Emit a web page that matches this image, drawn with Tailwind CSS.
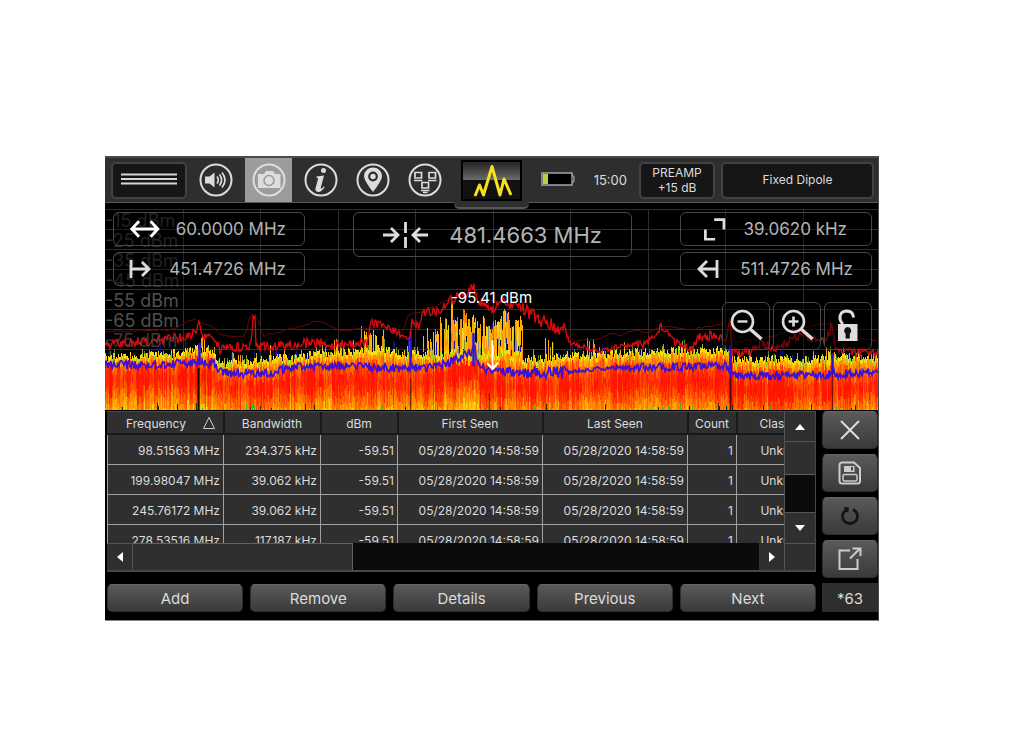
<!DOCTYPE html>
<html lang="en">
<head>
    <meta charset="UTF-8" />
    <meta name="viewport" content="width=device-width, initial-scale=1.0" />
    <title>Spectrum Analyzer</title>
    <script src="https://cdn.jsdelivr.net/npm/@tailwindcss/browser@4"></script>
</head>
<body class="bg-white pt-[156px] pl-[105px] pr-[145px] font-['Inter','Liberation_Sans',sans-serif] text-[#dcdcdc]">

<main class="bg-black border-t-2 border-r border-b border-[#4a4a4a] border-b-[#8a8a8a]">

    <!-- Toolbar -->
    <header class="relative z-10 flex items-center gap-1.5 h-[45px] pl-1.5 pr-1 bg-[#2e2e2e] border-b border-[#585858]">
        <button aria-label="Menu" class="w-[76px] h-[37px] rounded-[5px] border-2 border-[#424242] bg-[#161616] flex items-center justify-center">
            <svg class="w-14 h-4" viewBox="0 0 56 16" stroke="#d6d6d6" stroke-width="1.8"><path d="M0 2.500h56M0 7h56M0 11.500h56"/></svg>
        </button>
        <button aria-label="Sound" class="w-[46px] h-11 flex items-center justify-center">
            <svg class="w-[34px] h-[34px]" viewBox="0 0 34 34" fill="none" stroke="#dcdcdc">
                <circle cx="17" cy="17" r="15.5" stroke-width="2"/>
                <path d="M6 13.5h4.500l5-4v15l-5-4H6z" fill="#dcdcdc" stroke="none"/>
                <path d="M18 13.500q2.500 3.500 0 7M20.500 11.500q4.200 5.500 0 11M23 9.500q6 7.500 0 15" stroke-width="1.7"/>
            </svg>
        </button>
        <button aria-label="Screenshot" class="w-[47px] h-11 flex items-center justify-center bg-[#9c9c9a]">
            <svg class="w-[34px] h-[34px]" viewBox="0 0 34 34" fill="none" stroke="#dedede">
                <circle cx="17" cy="17" r="15.500" stroke-width="2"/>
                <path d="M7 11h5l2-3h7l2 3h5.500v14H6V11z" fill="#dedede" stroke="none"/>
                <circle cx="17" cy="17.500" r="5" stroke="#9c9c9a" stroke-width="1.600"/>
            </svg>
        </button>
        <button aria-label="Information" class="w-[46px] h-11 flex items-center justify-center">
            <svg class="w-[34px] h-[34px]" viewBox="0 0 34 34" fill="none" stroke="#dcdcdc">
                <circle cx="17" cy="17" r="15.500" stroke-width="2"/>
                <circle cx="19.500" cy="7.500" r="2.500" fill="#dcdcdc" stroke="none"/>
                <path d="M12.500 13.500l7.500-1-3.200 12.200q-.3 1.300.7.900 1.200-.6 2.200-2.300l.9.600q-2.700 5-6.500 5-3.400-.3-2.600-3.700l2.500-9.300q.2-1.200-1.700-1.300z" fill="#dcdcdc" stroke="none"/>
            </svg>
        </button>
        <button aria-label="Location" class="w-[46px] h-11 flex items-center justify-center">
            <svg class="w-[34px] h-[34px]" viewBox="0 0 34 34" fill="none" stroke="#dcdcdc">
                <circle cx="17" cy="17" r="15.500" stroke-width="2"/>
                <path d="M17 29q-9-11.500-9-16a9 8.500 0 0 1 18 0q0 4.500-9 16z" fill="#dcdcdc" stroke="none"/>
                <circle cx="17" cy="13.500" r="3.800" stroke="#2e2e2e" stroke-width="2.200"/>
            </svg>
        </button>
        <button aria-label="Network" class="w-[46px] h-11 flex items-center justify-center">
            <svg class="w-[34px] h-[34px]" viewBox="0 0 34 34" fill="none" stroke="#dcdcdc">
                <circle cx="17" cy="17" r="15.500" stroke-width="2"/>
                <path d="M7 9.500h6.500v5.500H7zM21 9.500h6.500v5.500H21zM14 19.500h6.500v5.500H14z" stroke-width="1.700"/>
                <path d="M6 17.500h8.500M20 17.500h8.500M13 27.500h8.500M15 29.500h4.500" stroke-width="1.400"/>
            </svg>
        </button>

        <!-- Active tool tab hangs below the bar -->
        <div class="relative self-stretch w-[75px] flex items-center justify-center">
            <div class="absolute inset-x-0 top-[40px] h-[11px] rounded-b-[5px] bg-[#2e2e2e] border-b-2 border-[#555]"></div>
            <button aria-label="Spectrum" class="relative w-[61px] h-[41px] border-2 border-black bg-linear-to-b from-[#2a2a2a] from-5% via-[#6c6c6c] via-48% to-[#111] to-50% flex items-center justify-center">
                <svg class="w-full h-full" viewBox="0 0 57 37" fill="none" stroke="#f7e11b" stroke-width="3" stroke-linejoin="round"><path d="M12 34l4.500-11 4 10L29 4.500 37 33 41 17l7 16"/></svg>
            </button>
        </div>

        <svg aria-label="Battery" class="w-[34px] h-4 ml-1.5" viewBox="0 0 34 16">
            <rect x="1" y="1" width="30" height="12" fill="#000" stroke="#a5a5a5" stroke-width="1.500"/>
            <path d="M31 4h2v6h-2" fill="#666" stroke="#a5a5a5"/>
            <rect x="2" y="2" width="5" height="10" fill="#b9d432"/>
        </svg>
        <span class="w-[46px] text-[13px] leading-5 text-right">15:00</span>
        <button class="w-[76px] h-[37px] ml-1.5 rounded-[5px] border-2 border-[#424242] bg-[#161616] text-xs leading-[15px]">PREAMP<br />+15 dB</button>
        <button class="flex-1 h-[37px] rounded-[5px] border-2 border-[#424242] bg-[#161616] text-xs">Fixed Dipole</button>
    </header>

    <!-- Spectrum plot -->
    <section class="relative pt-[9px] pl-2 pr-1.5 pb-[60px]">
        <svg id="plot" class="absolute inset-0 w-full h-full" viewBox="0 0 773 207" preserveAspectRatio="none" fill="none"></svg>
        <div class="absolute top-2 left-0 text-lg leading-5 text-[#303030]">
            <p>-15 dBm</p><p>-25 dBm</p><p>-35 dBm</p><p>-45 dBm</p>
            <div class="text-[#505050]"><p>-55 dBm</p><p>-65 dBm</p><p class="opacity-70">-75 dBm</p></div>
        </div>
        <p class="absolute top-[85px] inset-x-0 text-center text-[15px] leading-5 text-white">-95.41 dBm</p>

        <div class="relative flex justify-between items-start">
            <div class="flex flex-col gap-1.5 text-[17px] text-[#b4b4b4]">
                <button class="w-48 h-[34px] rounded-md border border-[#484848] bg-black/30 flex items-center">
                    <svg class="w-16 h-6" viewBox="0 0 64 24" fill="none" stroke="#fff" stroke-width="3"><path d="M19 12h26M26 4l-7.500 8 7.500 8M38 4l7.500 8-7.500 8"/></svg>
                    <span class="flex-1 pt-0.5 pr-[18px] text-right whitespace-nowrap">60.0000 MHz</span>
                </button>
                <button class="w-48 h-[34px] rounded-md border border-[#484848] bg-black/30 flex items-center">
                    <svg class="w-12 h-6" viewBox="0 0 48 24" fill="none" stroke="#ddd" stroke-width="2.800"><path d="M17 3v18M18 12h17M28 5l7 7-7 7"/></svg>
                    <span class="flex-1 pt-0.5 pr-[18px] text-right whitespace-nowrap">451.4726 MHz</span>
                </button>
            </div>

            <button class="w-[279px] h-[45px] rounded-md border border-[#484848] flex items-center text-[22px] text-[#b4b4b4]">
                <svg class="w-[74px] h-8 ml-3.5" viewBox="0 0 74 32" fill="none" stroke="#ddd" stroke-width="2.800"><path d="M15 16h14M23 9l7 7-7 7M60 16H46M52 9l-7 7 7 7M37.500 3v11M37.500 18v11"/></svg>
                <span class="flex-1 pt-0.5 pr-[29px] text-right whitespace-nowrap">481.4663 MHz</span>
            </button>

            <div class="flex flex-col gap-1.5 text-[17px] text-[#b4b4b4]">
                <button class="w-48 h-[34px] rounded-md border border-[#484848] bg-black/30 flex items-center">
                    <svg class="w-16 h-6" viewBox="0 0 64 24" fill="none" stroke="#ddd" stroke-width="2.800"><path d="M34 2.500h10v10M25 12.500v10h10"/></svg>
                    <span class="flex-1 pt-0.5 pr-6 text-right whitespace-nowrap">39.0620 kHz</span>
                </button>
                <button class="w-48 h-[34px] rounded-md border border-[#484848] bg-black/30 flex items-center">
                    <svg class="w-12 h-6" viewBox="0 0 48 24" fill="none" stroke="#ddd" stroke-width="2.800"><path d="M36 3v18M35 12H18M26 4l-8 8 8 8"/></svg>
                    <span class="flex-1 pt-0.5 pr-[18px] text-right whitespace-nowrap">511.4726 MHz</span>
                </button>
                <div class="flex justify-end gap-[3px] pt-2.5">
                    <button aria-label="Zoom out" class="w-12 h-12 rounded-md border border-[#484848] bg-black/50 flex items-center justify-center">
                        <svg class="w-11 h-11" viewBox="0 0 44 44" fill="none" stroke="#ddd"><circle cx="18.500" cy="17.500" r="10.500" stroke-width="2.600"/><path d="M26 25l11.500 10" stroke-width="3.500"/><path d="M13.500 17.500h10" stroke-width="2.400"/></svg>
                    </button>
                    <button aria-label="Zoom in" class="w-12 h-12 rounded-md border border-[#484848] bg-black/50 flex items-center justify-center">
                        <svg class="w-11 h-11" viewBox="0 0 44 44" fill="none" stroke="#ddd"><circle cx="18.500" cy="17.500" r="10.500" stroke-width="2.600"/><path d="M26 25l11.500 10" stroke-width="3.500"/><path d="M13.500 17.500h10M18.500 12.500v10" stroke-width="2.600"/></svg>
                    </button>
                    <button aria-label="Unlock" class="w-12 h-12 rounded-md border border-[#484848] bg-black/50 flex items-center justify-center">
                        <svg class="w-11 h-11" viewBox="0 0 44 44" fill="none"><path d="M17 20q-3.500-3-3-7.500.8-5.500 7-5.500 6 .2 6.500 6.500" stroke="#ddd" stroke-width="3"/><rect x="12" y="20" width="19.500" height="17" fill="#ddd"/><path d="M21.700 23a3.800 3.800 0 0 1 2.100 6.800v4.700h-4.200v-4.700A3.800 3.800 0 0 1 21.700 23z" fill="#111"/></svg>
                    </button>
                </div>
            </div>
        </div>
    </section>

    <!-- Signal list -->
    <section class="flex gap-1.5 pl-0.5 pt-px pb-2">
        <div class="flex-1 min-w-0">
            <div class="grid grid-cols-[minmax(0,1fr)_31px] border-t border-r border-b-2 border-[#484848]">
                <div class="h-[131px] overflow-hidden bg-[#2f2f2f]">
                    <table class="table-fixed border-collapse w-[710px] text-[12px] leading-4 text-right text-[#dcdcdc]">
                        <thead>
                            <tr class="h-[22px] text-center border-b-2 border-[#181818] [&_th]:pt-0.5 [&_th]:pb-0 [&_th]:pr-0">
                                <th class="w-[116px] pl-0 border-r-2 border-[#181818] font-normal"><span class="inline-flex items-center gap-4 pl-3">Frequency<svg class="w-3.5 h-3.5" viewBox="0 0 14 14" fill="none" stroke="#ccc"><path d="M7 .5l5.500 11h-11z"/></svg></span></th>
                                <th class="w-[97px] pl-0 border-r-2 border-[#181818] font-normal">Bandwidth</th>
                                <th class="w-[77px] pl-0 border-r-2 border-[#181818] font-normal">dBm</th>
                                <th class="w-[145px] pl-0 border-r-2 border-[#181818] font-normal">First Seen</th>
                                <th class="w-[145px] pl-0 border-r-2 border-[#181818] font-normal">Last Seen</th>
                                <th class="w-[49px] pl-0 border-r-2 border-[#181818] font-normal">Count</th>
                                <th class="w-[81px] pl-[22px] font-normal text-left">Class</th>
                            </tr>
                        </thead>
                        <tbody class="[&_td]:border [&_td]:border-[#a0a0a0] [&_td]:h-[30px] [&_td]:pt-[3px] [&_td]:pb-0 [&_td]:pl-0 [&_td]:pr-[3px] [&_td]:whitespace-nowrap">
                            <tr><td>98.51563 MHz</td><td>234.375 kHz</td><td>-59.51</td><td>05/28/2020 14:58:59</td><td>05/28/2020 14:58:59</td><td>1</td><td>Unknown</td></tr>
                            <tr><td>199.98047 MHz</td><td>39.062 kHz</td><td>-59.51</td><td>05/28/2020 14:58:59</td><td>05/28/2020 14:58:59</td><td>1</td><td>Unknown</td></tr>
                            <tr><td>245.76172 MHz</td><td>39.062 kHz</td><td>-59.51</td><td>05/28/2020 14:58:59</td><td>05/28/2020 14:58:59</td><td>1</td><td>Unknown</td></tr>
                            <tr><td>278.53516 MHz</td><td>117.187 kHz</td><td>-59.51</td><td>05/28/2020 14:58:59</td><td>05/28/2020 14:58:59</td><td>1</td><td>Unknown</td></tr>
                        </tbody>
                    </table>
                </div>
                <div class="flex flex-col bg-[#0b0b0b] border-l border-[#555]">
                    <button aria-label="Scroll up" class="h-[30px] bg-[#2f2f2f] border-b border-[#555] flex items-center justify-center"><svg class="w-2.5 h-1.5" viewBox="0 0 10 6" fill="#fff"><path d="M5 0l5 6H0z"/></svg></button>
                    <div class="h-[33px] bg-[#2f2f2f] border-b border-[#606060]"></div>
                    <button aria-label="Scroll down" class="mt-auto h-[31px] bg-[#2f2f2f] border-t border-[#555] flex items-center justify-center"><svg class="w-2.5 h-1.5" viewBox="0 0 10 6" fill="#fff"><path d="M5 6l5-6H0z"/></svg></button>
                </div>
                <div class="flex h-[27px] bg-[#0b0b0b]">
                    <button aria-label="Scroll left" class="w-[26px] bg-[#2f2f2f] border-t border-r border-[#555] flex items-center justify-center"><svg class="w-1.5 h-2.5" viewBox="0 0 6 10" fill="#fff"><path d="M0 5l6-5v10z"/></svg></button>
                    <div class="w-[220px] bg-[#2f2f2f] border-t border-r border-[#606060]"></div>
                    <button aria-label="Scroll right" class="ml-auto w-[25px] bg-[#2f2f2f] flex items-center justify-center"><svg class="w-1.5 h-2.5" viewBox="0 0 6 10" fill="#fff"><path d="M6 5L0 0v10z"/></svg></button>
                </div>
                <div class="bg-[#2f2f2f] border-t border-l border-[#555]"></div>
            </div>

            <div class="grid grid-cols-5 gap-[7px] mt-3 text-[15px] leading-5 [&_button]:pt-0.5 [&_button]:h-7 [&_button]:rounded-[5px] [&_button]:border [&_button]:border-[#2e2e2e] [&_button]:border-t-[#666] [&_button]:bg-linear-to-b [&_button]:from-[#5a5a5a] [&_button]:to-[#3a3a3a]">
                <button>Add</button>
                <button>Remove</button>
                <button>Details</button>
                <button>Previous</button>
                <button>Next</button>
            </div>
        </div>

        <div class="w-14 flex flex-col gap-[5px] [&_button]:h-[38px] [&_button]:rounded-[5px] [&_button]:border [&_button]:border-[#2e2e2e] [&_button]:border-t-[#666] [&_button]:bg-linear-to-b [&_button]:from-[#5a5a5a] [&_button]:to-[#3a3a3a] [&_button]:flex [&_button]:items-center [&_button]:justify-center">
            <button aria-label="Close"><svg class="w-6 h-6" viewBox="0 0 24 24" stroke="#ddd" stroke-width="2"><path d="M3 3l18 18M21 3L3 21"/></svg></button>
            <button aria-label="Save">
                <svg class="w-6 h-6" viewBox="0 0 24 24" fill="none" stroke="#ccc" stroke-width="2"><path d="M4 1.500h12l6 5.500v13a2.500 2.500 0 0 1-2.500 2.500H4A2.500 2.500 0 0 1 1.500 20V4A2.500 2.500 0 0 1 4 1.500z"/><path d="M6 5h10.500v6H6z" fill="#ccc" stroke="none"/><path d="M14 6v3.500" stroke="#444"/><rect x="5" y="13.500" width="14" height="6.500" rx="1.500" stroke-width="1.500"/></svg>
            </button>
            <button aria-label="Reload"><svg class="w-5 h-5" viewBox="0 0 20 20" fill="none" stroke="#141414" stroke-width="2.800"><path d="M7 3.500q-4.500 2.500-4.500 7a7.500 7 0 0 0 15 0q0-4.500-4.500-7"/><path d="M4 2.200h3.800v4" stroke-width="1.800"/></svg></button>
            <button aria-label="Export"><svg class="w-6 h-6" viewBox="0 0 24 24" fill="none" stroke="#ccc" stroke-width="2"><path d="M12 3.500H1.500v18.500h18V12M12 11.500L22 1.500M14.500 1.500H22.500V9"/></svg></button>
            <output class="block h-[29px] bg-[#2e2e2e] text-[15px] leading-[31px] text-center">*63</output>
        </div>
    </section>
</main>

<script>
    const NS = 'http://www.w3.org/2000/svg';
    const plot = document.getElementById('plot');
    const W = 773, H = 207;

    // Fixed seed so the trace is the same on every load
    let seed = 4816;
    function rnd() {
        seed = (seed * 1664525 + 1013904223) % 4294967296;
        return seed / 4294967296;
    }

    function addPath(d, color, width = 1, opacity = 1) {
        const p = document.createElementNS(NS, 'path');
        p.setAttribute('d', d);
        p.setAttribute('stroke', color);
        p.setAttribute('stroke-width', width);
        p.setAttribute('stroke-opacity', opacity);
        plot.appendChild(p);
    }

    // Linear interpolation through [x, y] points
    function level(points, x) {
        for (let i = 1; i < points.length; i++) {
            const [x0, y0] = points[i - 1], [x1, y1] = points[i];
            if (x <= x1) return y0 + (y1 - y0) * (x - x0) / (x1 - x0);
        }
        return points[points.length - 1][1];
    }

    const live = [[0,155],[50,153],[80,150],[95,146],[109,148],[113,160],[145,160],[165,156],[195,155],[215,151],[260,149],[275,146],[290,150],[300,152],[380,151],[410,152],[418,155],[425,158],[450,154],[515,151],[560,148],[623,148],[626,157],[700,157],[773,154]];
    const avg = [[0,162],[50,161],[109,160],[112,168],[120,170],[165,171],[180,165],[215,163],[300,165],[335,163],[350,157],[365,150],[370,147],[375,166],[425,171],[460,169],[500,165],[560,164],[620,163],[626,172],[680,173],[720,172],[773,169]];
    const max = [[0,141],[50,138],[85,133],[90,130],[94,117],[97,134],[109,137],[115,146],[140,143],[146,142],[148,112],[150,112],[151,144],[185,142],[205,140],[240,141],[262,140],[265,118],[285,125],[298,135],[304,138],[307,117],[313,125],[318,109],[333,108],[345,98],[360,90],[369,85],[373,99],[388,107],[395,98],[415,104],[435,117],[450,124],[460,128],[465,140],[495,149],[515,143],[540,142],[557,124],[570,138],[588,145],[594,133],[622,133],[625,115],[627,150],[645,148],[655,140],[670,146],[695,133],[720,137],[727,123],[730,146],[740,149],[773,150]];
    const hold = [[0,129],[65,127],[90,116],[109,125],[116,132],[140,134],[145,112],[152,112],[158,133],[215,118],[235,128],[275,124],[298,130],[303,112],[320,108],[369,84],[375,96],[415,102],[450,122],[470,138],[495,136],[507,130],[515,133],[527,127],[545,130],[557,123],[585,127],[620,120],[625,113],[630,139],[660,135],[690,126],[727,120],[740,134],[773,138]];
    // [from, to, height, chance] of the bursts standing above the noise floor
    const bursts = [[96,103,20,.5],[125,150,12,.4],[165,180,12,.3],[220,240,14,.4],[256,280,22,.6],[302,306,24,.8],[310,335,24,.4],[335,346,36,.8],[346,375,48,1],[375,392,38,1],[392,418,42,.95],[430,450,24,.25],[480,490,14,.4],[720,730,10,.4]];

    // Graticule
    let grid = '';
    for (let y = 6; y < 150; y += 20) grid += `M0 ${y + .5}H${W}`;
    for (let i = 1; i < 10; i++) grid += `M${Math.round(i * 77.5)}.5 6V${H}`;
    addPath(grid, '#2e2e2e');

    // Persistence columns, collected per colour
    const cols = {};
    function cell(color, x, y0, y1) {
        if (y1 > y0) cols[color] = (cols[color] || '') + `M${x}.5 ${Math.round(y0)}V${Math.round(y1)}`;
    }
    const heat = ['#ff1500', '#ff2a00', '#ff4a00', '#ff6a00', '#ff8a00', '#ffaa00', '#f6cf10'];
    let drift = 0;
    let burstSize = .7;
    for (let x = 0; x < W; x++) {
        // neighbouring columns share part of their level
        if (rnd() < .4) drift = (rnd() - .5) * 2.6;
        if (rnd() < .5) burstSize = .5 + rnd() * .5;
        let t = level(live, x) + (rnd() - .6) * 9;
        const a = level(avg, x);
        const b = bursts.find(b => x >= b[0] && x < b[1]);
        if (b && rnd() < b[3]) {
            let y = t - b[2] * burstSize;
            while (y < t) {
                const n = y + 5 + rnd() * 16;
                const r = rnd();
                cell(r < .45 ? '#ffb000' : r < .68 ? '#ff9010' : r < .8 ? '#e8d820' : r < .87 ? '#8c8c8c' : r < .91 ? '#7aa020' : r < .95 ? '#1c1ca0' : '#000', x, y, Math.min(n, t));
                y = n;
            }
        } else if (rnd() < .25) {
            cell(['#101080', '#4a8a20', '#0a0a60', '#a8a830'][Math.floor(rnd() * 4)], x, t - 2 - rnd() * 6, t);
        }
        cell(rnd() < .8 ? '#f4e010' : '#a8d020', x, t, t + 5);
        cell(rnd() < .5 ? '#ffb000' : '#ff8c00', x, t + 4, t + 10);
        const shift = drift + rnd() * 1.4 - .5;
        for (let y = Math.round(t + 8); y < H;) {
            const n = Math.min(H, y + 5 + Math.floor(rnd() * 9));
            const below = y - a - 10;
            let k = below < 0 ? -below / 7 : below / 6.5;
            k = Math.max(0, Math.min(6, Math.round(k + shift + rnd() * 1.2 - .6)));
            cell(heat[k], x, y, n);
            y = n;
        }
        if (rnd() < .07) cell(rnd() < .6 ? '#50b020' : '#203010', x, H - 2 - rnd() * 5, H);
    }
    for (const color in cols) addPath(cols[color], color);

    // Carriers with empty gaps underneath
    addPath('M93.500 165V207', '#120c08', 2);
    addPath('M305.500 176V207M384.500 190V207', '#552010', 1.5, .8);
    addPath('M625.500 150V207', '#500808', 2);
    addPath('M727.500 160V207', '#801010', 1.5);
    addPath('M94.500 140V162M305.500 128V163M368.500 130V163M625.500 142V170M727.500 150V171', '#2a10e0', 2.5);

    function trace(points, noise, step) {
        let d = '';
        for (let x = 0; x <= W; x += step) {
            const n = x > 460 && x < 525 ? noise * .5 : x > 415 && x < 460 ? noise * 1.4 : noise;
            d += `${x ? 'L' : 'M'}${x} ${(level(points, x) + (rnd() - .5) * n).toFixed(1)}`;
        }
        return d;
    }
    addPath(trace(hold, 2, 3), '#640a0a');
    addPath(trace(max, 10, 1), '#d80c10', 1.3);
    addPath(trace(avg, 9, 1), '#3c10d8', 1.7);

    // Marker
    addPath('M387.500 137V165M382 160l5.500 6 5.500-6', '#fff', 2);
</script>
</body>
</html>
